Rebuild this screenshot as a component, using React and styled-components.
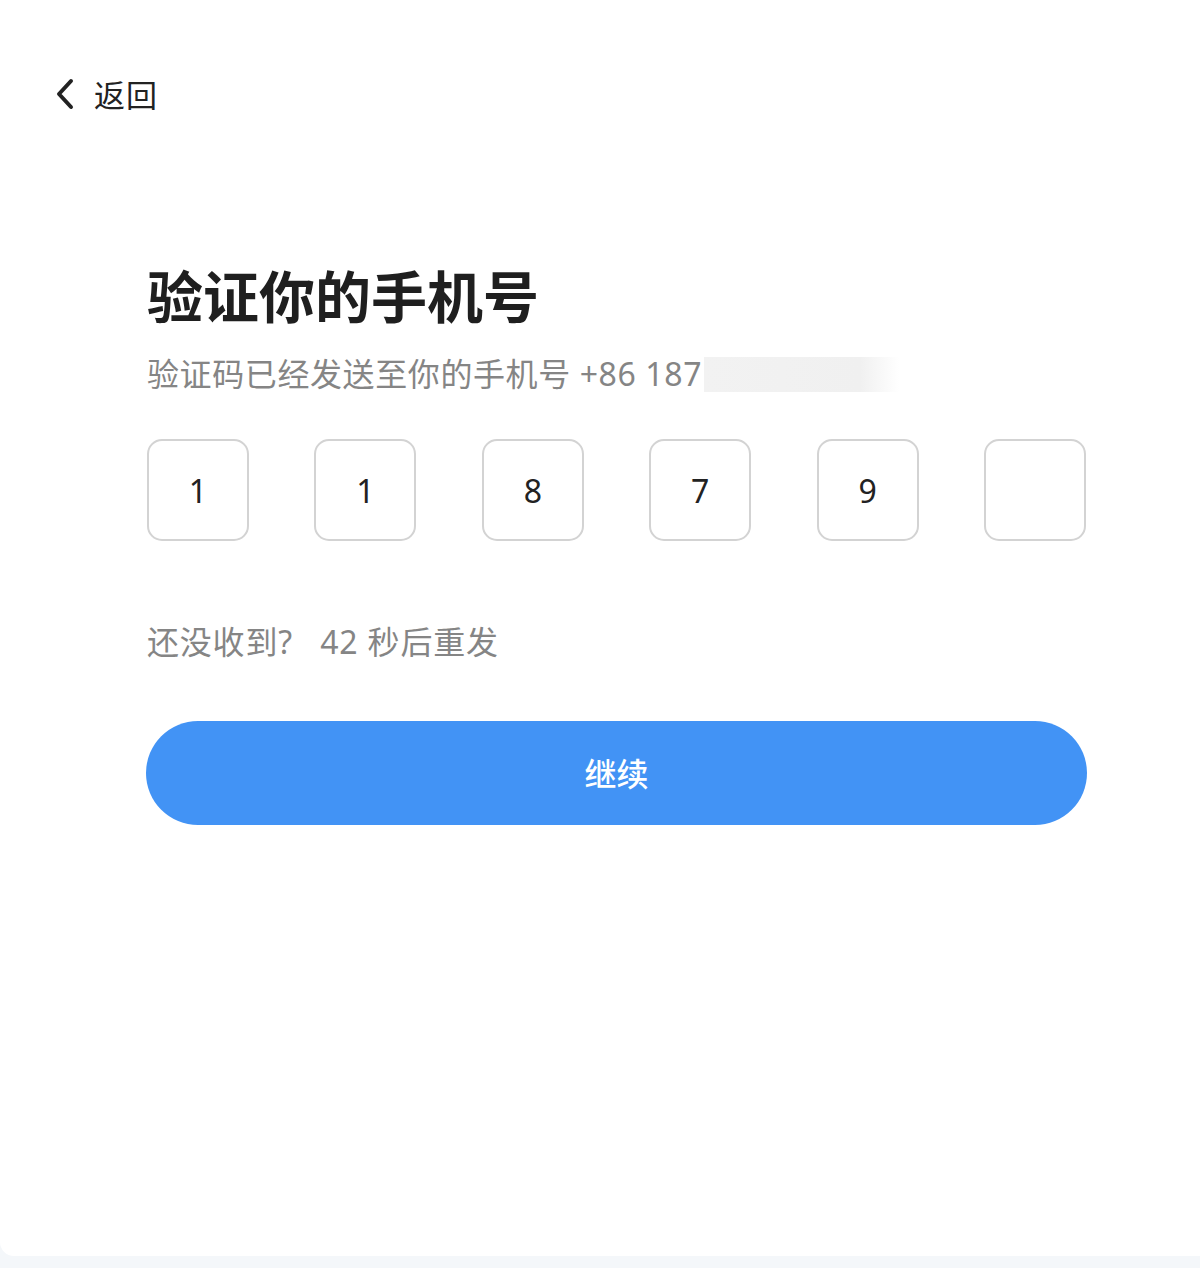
import React from 'react';
import styled, { createGlobalStyle } from 'styled-components';

const GlobalStyle = createGlobalStyle`
	html, body {
		margin: 0;
		padding: 0;
		background: #f4f7fa;
	}
	body {
		font-family: "Noto Sans", "Noto Sans CJK SC", sans-serif;
	}
`;

const code = ['1', '1', '8', '7', '9', ''];

function App() {
	return (
		<>
			<GlobalStyle />
			<Page>
				<BackLink>
					<svg width="22" height="32" viewBox="0 0 22 32" fill="none">
						<path d="M17 3 L5 16 L17 29" stroke="#222" strokeWidth="4" strokeLinecap="round" strokeLinejoin="round" />
					</svg>
					<span>返回</span>
				</BackLink>
				<Content>
					<Title>验证你的手机号</Title>
					<Subtitle>
						验证码已经发送至你的手机号 +86 187<Masked />
					</Subtitle>
					<CodeRow>
						{code.map((d, i) => (
							<CodeBox key={i}>{d}</CodeBox>
						))}
					</CodeRow>
					<Resend>还没收到?&nbsp;&nbsp;&nbsp;42 秒后重发</Resend>
					<ContinueButton>继续</ContinueButton>
				</Content>
			</Page>
		</>
	);
}

const Page = styled.div`
	height: 1256px;
	background: #fff;
	border-bottom-left-radius: 14px;
	box-sizing: border-box;
	padding-top: 76px;
`;

const BackLink = styled.div`
	display: flex;
	align-items: center;
	gap: 18px;
	padding-left: 54px;
	height: 36px;
	color: #222;
	font-size: 31px;
	line-height: 36px;
	font-family: "Noto Sans CJK SC", sans-serif;
	span {
		letter-spacing: 1px;
	}
`;

const Content = styled.div`
	width: 940px;
	margin-left: 146px;
	padding-top: 142px;
	display: flex;
	flex-direction: column;
`;

const Title = styled.h1`
	margin: 0 0 0 1px;
	font-family: "Noto Sans CJK SC", sans-serif;
	font-size: 56px;
	line-height: 80px;
	font-weight: 700;
	color: #1f1f1f;
`;

const Subtitle = styled.p`
	margin: 14px 0 0 1px;
	display: flex;
	align-items: center;
	font-family: "Noto Sans", "Noto Sans CJK SC", sans-serif;
	font-size: 32px;
	letter-spacing: 0.6px;
	line-height: 52px;
	color: #858585;
`;

const Masked = styled.span`
	display: inline-block;
	width: 195px;
	height: 35px;
	margin-left: 2px;
	background: linear-gradient(90deg, #f2f2f2 0%, #f0f0f0 80%, #ffffff 100%);
`;

const CodeRow = styled.div`
	display: flex;
	justify-content: space-between;
	margin-top: 39px;
	padding-left: 1px;
`;

const CodeBox = styled.div`
	width: 102px;
	height: 102px;
	box-sizing: border-box;
	border: 2px solid #d3d3d3;
	border-radius: 15px;
	display: flex;
	align-items: center;
	justify-content: center;
	font-family: "Noto Sans", sans-serif;
	font-size: 32px;
	color: #222;
`;

const Resend = styled.p`
	margin: 75px 0 0 1px;
	font-family: "Noto Sans", "Noto Sans CJK SC", sans-serif;
	font-size: 32px;
	letter-spacing: 0.8px;
	line-height: 52px;
	color: #858585;
`;

const ContinueButton = styled.button`
	margin-top: 53px;
	height: 104px;
	width: 941px;
	border: none;
	border-radius: 52px;
	background: #4293f5;
	color: #fff;
	font-family: "Noto Sans CJK SC", sans-serif;
	font-size: 32px;
	font-weight: 500;
	padding-bottom: 4px;
	cursor: pointer;
`;

export default App;
